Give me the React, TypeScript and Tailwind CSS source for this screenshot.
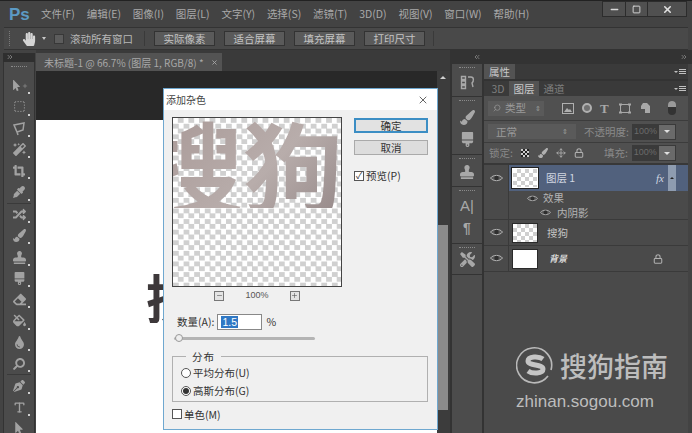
import { ChevronsLeft, ChevronsRight, Lock, Minus, Move, Plus, Search, Square, SquareDashed, Type, X } from 'lucide-react';
import type { ReactNode } from 'react';
import {
  FaBrush,
  FaCropAlt,
  FaEraser,
  FaEyeDropper,
  FaFillDrip,
  FaHandPaper,
  FaMagic,
  FaMousePointer,
  FaPaintBrush,
  FaPenNib,
  FaRandom,
  FaSearch,
  FaStamp,
  FaTint,
  FaTools,
} from 'react-icons/fa';

const cjk = '[font-family:"Noto_Sans_CJK_SC","Liberation_Sans",sans-serif]';

const menus = ['文件(F)', '编辑(E)', '图像(I)', '图层(L)', '文字(Y)', '选择(S)', '滤镜(T)', '3D(D)', '视图(V)', '窗口(W)', '帮助(H)'];

const tools: ReactNode[] = [
  <span key="move" className="flex items-center"><FaMousePointer size={11} /><Plus size={6} /></span>,
  <SquareDashed key="marquee" size={13} strokeWidth={1.5} />,
  <svg key="lasso" width="15" height="15" viewBox="0 0 15 15" fill="none" stroke="currentColor" strokeWidth="1.5"><path d="M2 4l10-2-1 7-6 2zM5 11l1 3" /></svg>,
  <FaMagic key="wand" size={13} />,
  <FaCropAlt key="crop" size={12} />,
  <FaEyeDropper key="drop" size={12} />,
  null,
  <FaRandom key="heal" size={13} />,
  <FaPaintBrush key="brush" size={13} />,
  <FaStamp key="stamp" size={13} />,
  <FaBrush key="history" size={13} />,
  <FaEraser key="eraser" size={13} />,
  <FaFillDrip key="bucket" size={13} />,
  <FaTint key="blur" size={13} />,
  <FaSearch key="dodge" size={12} className="-scale-x-100" />,
  null,
  <FaPenNib key="pen" size={12} />,
  <Type key="type" size={13} strokeWidth={2.5} />,
  <FaMousePointer key="select" size={12} />,
];

function Tool({ children }: { children: ReactNode }) {
  return (
    <div className="relative flex h-[21.3px] w-full shrink-0 items-center justify-center text-[#a2a2a2]">
      {children}
      <span className="absolute right-[4px] bottom-[2px] h-[2px] w-[2px] bg-[#d0d0d0]" />
    </div>
  );
}

function Grip() {
  return <div className="mx-auto h-[2px] w-[16px] border-t border-dotted border-[#8a8a8a]" />;
}

function PanelMenu() {
  return (
    <span className="ml-auto mr-[2px] flex items-center gap-[1px]">
      <span className="h-0 w-0 border-x-[2px] border-t-[2px] border-x-transparent border-t-[#c0c0c0]" />
      <span className="flex flex-col gap-[1px]">
        <span className="h-[1px] w-[7px] bg-[#c0c0c0]" />
        <span className="h-[1px] w-[7px] bg-[#c0c0c0]" />
        <span className="h-[1px] w-[7px] bg-[#c0c0c0]" />
      </span>
    </span>
  );
}

function OptionButton({ label }: { label: string }) {
  return (
    <button className="flex h-[15px] w-[61px] items-center justify-center border border-[#333333] bg-[#5a5a5a] text-[10.5px] text-[#c4c4c4]">
      {label}
    </button>
  );
}

function LayerEye({ small = false }: { small?: boolean }) {
  const w = small ? 11 : 13;
  return (
    <svg width={w} height={w * 0.62} viewBox="0 0 13 8" className="shrink-0">
      <path d="M0.5 4C3 0.5 10 0.5 12.5 4C10 7.5 3 7.5 0.5 4z" fill="#5a5a5a" stroke="#b4b4b4" />
      <circle cx="6.5" cy="4" r="2.2" fill="#2e2e2e" />
    </svg>
  );
}

function Caret() {
  return (
    <span className="flex h-[16px] w-[18px] items-center justify-center border border-[#3a3a3a] bg-[#6a6a6a]">
      <span className="h-0 w-0 border-x-[3px] border-t-[3px] border-x-transparent border-t-[#e0e0e0]" />
    </span>
  );
}

function Thumb({ blank = false, selected = false }: { blank?: boolean; selected?: boolean }) {
  return (
    <div
      className={`h-[20px] w-[26px] shrink-0 border ${
        selected ? 'border-white outline outline-1 outline-[#222222]' : 'border-[#2a2a2a]'
      } ${
        blank
          ? 'bg-white'
          : 'bg-white bg-[conic-gradient(#cfcfcf_25%,#ffffff_0_50%,#cfcfcf_0_75%,#ffffff_0)] bg-[length:8px_8px]'
      }`}
    />
  );
}

function SogouMark() {
  return (
    <svg width="38" height="38" viewBox="0 0 38 38" fill="none" className="shrink-0">
      <path d="M32 30A17.5 17.5 0 1 1 35 24" stroke="#b9b9b9" strokeWidth="1.6" />
      <path d="M27 13c-4-3-15-3-15 2s15 3 15 8-11 5-15 2" stroke="#c4c4c4" strokeWidth="5" />
    </svg>
  );
}

export default function App() {
  return (
    <div className={`relative flex h-[433px] w-[692px] flex-col overflow-hidden bg-[#434343] ${cjk}`}>
      {/* menu bar */}
      <div className="flex h-[27px] shrink-0 items-center border-t border-[#222222] pl-[9px] text-[10.5px] text-[#a9a9a9]">
        <span className="mr-[14px] w-[18px] font-['Liberation_Sans'] text-[17px] font-bold leading-none text-[#5c9ac4]">Ps</span>
        <div className="flex gap-[11.8px]">
          {menus.map((m) => (
            <span key={m} className="whitespace-nowrap">{m}</span>
          ))}
        </div>
        <div className="ml-auto mr-[5px] flex h-[16px] -translate-y-[5px] border border-[#2c2c2c] bg-[#505050]">
          <div className="flex w-[23px] items-center justify-center border-r border-[#2c2c2c]"><Minus size={11} strokeWidth={3} className="text-[#d8d8d8]" /></div>
          <div className="flex w-[22px] items-center justify-center border-r border-[#2c2c2c]"><Square size={9} strokeWidth={2.5} className="text-[#d8d8d8]" /></div>
          <div className="flex w-[38px] items-center justify-center"><X size={11} strokeWidth={3.5} className="text-[#e0e0e0]" /></div>
        </div>
      </div>

      {/* options bar */}
      <div className="mx-[4px] flex h-[23px] shrink-0 items-center border-y border-[#333333] bg-[#494949] text-[10.5px] text-[#b8b8b8]">
        <div className="ml-[5px] h-[15px] w-[2px] border-l border-dotted border-[#7a7a7a]" />
        <FaHandPaper size={14} className="ml-[11px] text-[#d4d4d4]" />
        <span className="ml-[6px] h-0 w-0 border-x-[2.5px] border-t-[3px] border-x-transparent border-t-[#c8c8c8]" />
        <span className="ml-[8px] h-[10px] w-[10px] border border-[#383838] bg-[#5c5c5c]" />
        <span className="ml-[6px] whitespace-nowrap">滚动所有窗口</span>
        <span className="ml-[11px] h-[15px] w-px bg-[#3a3a3a]" />
        <div className="ml-[9px] flex gap-[9px]">
          <OptionButton label="实际像素" />
          <OptionButton label="适合屏幕" />
          <OptionButton label="填充屏幕" />
          <OptionButton label="打印尺寸" />
        </div>
        <span className="ml-[8px] h-[15px] w-px bg-[#3a3a3a]" />
      </div>

      <div className="flex min-h-0 flex-1">
        {/* toolbox */}
        <div className="flex w-[36px] shrink-0 flex-col pl-[3px] pr-[1px] pt-[3px]">
          <div className="h-[9px] shrink-0 bg-[#2f2f2f] pl-[3px] text-[#a0a0a0]"><ChevronsRight size={8} /></div>
          <div className="flex flex-1 flex-col overflow-hidden border-x border-[#333333] bg-[#4b4b4b] pt-[4px]">
            <Grip />
            <div className="mt-[8px] shrink-0" />
            {tools.map((t, i) =>
              t === null ? (
                <div key={i} className="mx-[3px] h-px shrink-0 bg-[#3a3a3a]" />
              ) : (
                <Tool key={i}>{t}</Tool>
              ),
            )}
          </div>
        </div>

        {/* document */}
        <div className="flex min-w-0 flex-1 flex-col">
          <div className="flex h-[21px] shrink-0 items-end bg-[#3a3a3a] pt-[3px]">
            <div className="flex h-[18px] w-[186px] items-center gap-[7px] bg-[#535353] pl-[8px] text-[10px] text-[#a8a8a8]">
              <span className="whitespace-nowrap">未标题-1 @ 66.7% (图层 1, RGB/8) *</span>
              <X size={7} strokeWidth={3} className="shrink-0" />
            </div>
          </div>
          <div className="flex min-h-0 flex-1">
            <div className="flex min-w-0 flex-1 flex-col bg-[#282828]">
              <div className="h-[49px] shrink-0" />
              <div className="relative flex-1 overflow-hidden border-t border-dashed border-white bg-white">
                <div className="absolute left-[110px] top-[150px] h-[52px] w-[17px] overflow-hidden">
                  <span className="block text-[52px] font-bold leading-none text-[#3d383a]">搜</span>
                </div>
              </div>
            </div>
            <div className="flex w-[13px] shrink-0 flex-col bg-[#3c3c3c]">
              <span className="ml-[3px] mt-[5px] h-0 w-0 border-x-[3px] border-b-[3px] border-x-transparent border-b-[#d0d0d0]" />
              <div className="mr-[2px] mt-[146px] h-[185px] bg-[#8b8b8b]" />
            </div>
          </div>
        </div>

        {/* right dock */}
        <div className="flex w-[242px] shrink-0 flex-col border-l-2 border-[#333333]">
          <div className="flex h-[14px] shrink-0 items-center justify-between bg-[#333333] pl-[21px] pr-[4px] text-[#9a9a9a]">
            <ChevronsLeft size={8} />
            <ChevronsRight size={8} />
          </div>
          <div className="flex min-h-0 flex-1">
            <div className="flex w-[32px] shrink-0 flex-col border-r-2 border-[#333333] bg-[#4c4c4c] text-[#a8a8a8]">
              <div className="flex h-[33px] flex-col items-center border-b border-[#333333] pt-[3px]">
                <Grip />
                <svg width="15" height="15" viewBox="0 0 15 15" fill="none" stroke="currentColor" className="mt-[6px]"><path d="M1.5 1.5h4v3h-4zM1.5 6h4v3h-4zM1.5 10.5h4v3h-4zM8 2h3c3 0 3 4 1 6l1 4" strokeWidth="1.4" /></svg>
              </div>
              <div className="flex h-[58px] flex-col items-center gap-[3px] border-b border-[#333333] pt-[3px]">
                <Grip />
                <FaPaintBrush size={15} className="mt-[5px]" />
                <FaBrush size={15} className="mt-[4px]" />
              </div>
              <div className="flex h-[32px] flex-col items-center border-b border-[#333333] pt-[3px]">
                <Grip />
                <FaStamp size={14} className="mt-[5px]" />
              </div>
              <div className="flex h-[57px] flex-col items-center border-b border-[#333333] pt-[3px] font-['Liberation_Sans']">
                <Grip />
                <span className="mt-[4px] text-[15px] leading-[20px]">A|</span>
                <span className="mt-[2px] text-[14px] font-bold leading-[20px]">¶</span>
              </div>
              <div className="flex h-[31px] flex-col items-center border-b border-[#333333] pt-[3px]">
                <Grip />
                <FaTools size={15} className="mt-[3px]" />
              </div>
            </div>

            <div className="mr-[4px] flex min-w-0 flex-1 flex-col bg-[#4a4a4a] text-[10.5px] text-[#b0b0b0]">
              <div className="flex h-[15px] shrink-0 items-stretch bg-[#3a3a3a]">
                <span className="flex w-[31px] items-center justify-center bg-[#535353] text-[#c8c8c8]">属性</span>
                <PanelMenu />
              </div>
              <div className="flex h-[17px] shrink-0 items-stretch border-t-2 border-[#333333] bg-[#3a3a3a]">
                <span className="ml-[3px] flex w-[22px] items-center justify-center text-[#7e7e7e]">3D</span>
                <span className="flex w-[30px] items-center justify-center bg-[#535353] text-[#c8c8c8]">图层</span>
                <span className="flex w-[30px] items-center justify-center text-[#7e7e7e]">通道</span>
                <PanelMenu />
              </div>

              {/* filter row */}
              <div className="flex h-[25px] shrink-0 items-center border-b border-[#3c3c3c] bg-[#505050] pl-[4px]">
                <div className="flex h-[15px] w-[56px] items-center gap-[4px] bg-[#5a5a5a] pl-[5px] text-[#9a9a9a]">
                  <Search size={8} className="-scale-x-100" />
                  <span>类型</span>
                  <span className="ml-auto mr-[3px] text-[7px]">⇕</span>
                </div>
                <div className="ml-[18px] flex items-center gap-[8px] text-[#a8a8a8]">
                  <svg width="12" height="11" viewBox="0 0 12 11" className="text-[#b0b0b0]"><rect x="0.5" y="0.5" width="11" height="10" fill="none" stroke="currentColor" /><path d="M2 9l3-4 2 2 1-1 2 3z" fill="currentColor" /></svg>
                  <span className="h-[10px] w-[10px] rounded-full border-2 border-[#b0b0b0] bg-[#707070]" />
                  <span className="w-[11px] font-['Liberation_Serif'] text-[13px] font-bold leading-none">T</span>
                  <svg width="12" height="11" viewBox="0 0 12 11" fill="none" stroke="currentColor"><path d="M1.5 1.5h9v8h-9z" /><path d="M0 1.5h3M9 1.5h3M0 9.5h3M9 9.5h3" strokeWidth="2" /></svg>
                  <svg width="11" height="12" viewBox="0 0 11 12" className="ml-[1px]"><path d="M3 1h4l3 3v7H5V7H1V4z" fill="currentColor" /></svg>
                </div>
                <span className="ml-[17px] flex h-[14px] w-[8px] flex-col overflow-hidden rounded-sm bg-[#333333]"><span className="h-[6px] bg-[#9a9a9a]" /></span>
              </div>

              {/* blend row */}
              <div className="flex h-[22px] shrink-0 items-center border-b border-[#3c3c3c] bg-[#505050] pl-[4px]">
                <div className="flex h-[15px] w-[88px] items-center justify-between bg-[#5a5a5a] px-[8px] text-[#9a9a9a]">
                  <span>正常</span>
                  <span className="text-[7px]">⇕</span>
                </div>
                <span className="ml-[8px] whitespace-nowrap text-[#8a8a8a]">不透明度:</span>
                <span className="ml-[3px] flex h-[16px] w-[26px] items-center bg-[#3a3a3a] pl-[2px] font-['Liberation_Sans'] text-[9px] text-[#6a6a6a]">100%</span>
                <Caret />
              </div>

              {/* lock row */}
              <div className="flex h-[22px] shrink-0 items-center border-b-2 border-[#383838] bg-[#505050] pl-[5px]">
                <span className="whitespace-nowrap text-[#8a8a8a]">锁定:</span>
                <span className="ml-[8px] h-[8px] w-[8px] bg-[conic-gradient(#222222_25%,#cccccc_0_50%,#222222_0_75%,#cccccc_0)] bg-[length:4px_4px]" />
                <FaPaintBrush size={10} className="ml-[9px]" />
                <Move size={10} className="ml-[8px]" />
                <Lock size={10} strokeWidth={2.5} className="ml-[8px]" />
                <span className="ml-[20px] whitespace-nowrap text-[#8a8a8a]">填充:</span>
                <span className="ml-[4px] flex h-[16px] w-[26px] items-center bg-[#3a3a3a] pl-[2px] font-['Liberation_Sans'] text-[9px] text-[#6a6a6a]">100%</span>
                <Caret />
              </div>

              {/* layers */}
              <div className="flex h-[55px] shrink-0 border-b border-[#3a3a3a]">
                <div className="flex w-[25px] shrink-0 justify-center border-r border-[#3a3a3a] pt-[9px]"><LayerEye /></div>
                <div className="flex min-w-0 flex-1 flex-col">
                  <div className="flex h-[26px] shrink-0 items-center bg-[#51617d] pl-[3px] text-[#d0d6e0]">
                    <Thumb selected />
                    <span className="ml-[8px]">图层 1</span>
                    <span className="ml-auto mr-[1px] font-['Liberation_Serif'] text-[11px] italic">fx</span>
                    <span className="ml-[3px] mr-[12px] flex h-full w-[8px] items-center justify-center bg-[#8e9cb0]">
                      <span className="h-0 w-0 border-x-[2px] border-b-[2px] border-x-transparent border-b-[#222222]" />
                    </span>
                  </div>
                  <div className="flex h-[14.5px] items-center gap-[5px] pl-[18px] text-[#b4b4b4]"><LayerEye small /><span>效果</span></div>
                  <div className="flex h-[14.5px] items-center gap-[6px] pl-[31px] text-[#b4b4b4]"><LayerEye small /><span>内阴影</span></div>
                </div>
              </div>
              <div className="flex h-[26px] shrink-0 items-center border-b border-[#3a3a3a]">
                <div className="flex h-full w-[25px] shrink-0 items-center justify-center border-r border-[#3a3a3a]"><LayerEye /></div>
                <div className="ml-[3px]"><Thumb /></div>
                <span className="ml-[9px] text-[#c4c4c4]">搜狗</span>
              </div>
              <div className="flex h-[26px] shrink-0 items-center border-b border-[#3a3a3a]">
                <div className="flex h-full w-[25px] shrink-0 items-center justify-center border-r border-[#3a3a3a]"><LayerEye /></div>
                <div className="ml-[3px]"><Thumb blank /></div>
                <span className="ml-[11px] text-[9px] font-bold italic text-[#d8d8d8]">背景</span>
                <Lock size={10} strokeWidth={2.5} className="ml-[86px]" />
              </div>
            </div>
          </div>
        </div>
      </div>

      {/* filter dialog */}
      <div className="absolute left-[163px] top-[88px] flex h-[342px] w-[275px] flex-col border border-[#6fa8d0] bg-[#f0f0f0] text-[10.5px] text-[#333333]">
        <div className="flex h-[21px] shrink-0 items-center justify-between bg-white pl-[2px] pr-[8px] text-[10px] text-[#444444]">
          <span>添加杂色</span>
          <X size={12} strokeWidth={1.5} className="text-[#333333]" />
        </div>
        <div className="flex flex-1 flex-col pl-[8px] pt-[7px]">
          <div className="flex gap-[12px]">
            <div>
              <div className="relative h-[170px] w-[170px] overflow-hidden border border-[#444444] bg-white bg-[conic-gradient(#d0d0d0_25%,#ffffff_0_50%,#d0d0d0_0_75%,#ffffff_0)] bg-[length:10.6px_10.6px]">
                <span className="absolute left-[-30px] top-[2px] whitespace-nowrap bg-[linear-gradient(135deg,#a89896,#b8adab_60%,#978a8a)] bg-clip-text text-[100px] font-semibold leading-[88px] text-transparent">搜狗</span>
              </div>
              <div className="mt-[2px] flex items-center justify-center gap-[21px] font-['Liberation_Sans'] text-[9px] text-[#555555]">
                <span className="flex h-[10px] w-[10px] items-center justify-center border border-[#777777] bg-[#e4e4e4]"><Minus size={7} /></span>
                <span>100%</span>
                <span className="flex h-[10px] w-[10px] items-center justify-center border border-[#777777] bg-[#e4e4e4]"><Plus size={7} /></span>
              </div>
            </div>
            <div className="flex w-[74px] flex-col pt-[1px]">
              <button className="flex h-[15px] items-center justify-center border-2 border-[#3c8ec4] bg-[#e2e2e2]">确定</button>
              <button className="mt-[7px] flex h-[15px] items-center justify-center border border-[#aaaaaa] bg-[#dddddd]">取消</button>
              <div className="mt-[13px] flex items-center gap-[2px]">
                <span className="flex h-[10px] w-[10px] items-center justify-center border border-[#555555] bg-white text-[9px] leading-none">✓</span>
                <span>预览(P)</span>
              </div>
            </div>
          </div>
          <div className="mt-[11px] flex items-center pl-[5px]">
            <span>数量(A):</span>
            <div className="ml-[3px] flex h-[16px] w-[45px] items-center border border-[#888888] bg-white pl-[3px]">
              <span className="bg-[#2f78c4] px-[1px] font-['Liberation_Sans'] leading-[12px] text-white">1.5</span>
            </div>
            <span className="ml-[4px]">%</span>
          </div>
          <div className="relative ml-[2px] mt-[7px] h-[3px] w-[141px] rounded-sm bg-[#b4b4b4]">
            <span className="absolute left-[1px] top-[-3px] h-[8px] w-[8px] rounded-sm border border-[#999999] bg-[#eeeeee]" />
          </div>
          <div className="relative mt-[16px] flex h-[46px] w-[256px] flex-col justify-end gap-[2px] border border-[#b0b0b0] pb-[2px] pl-[8px]">
            <span className="absolute left-[13px] top-[-8px] bg-[#f0f0f0] px-[6px] tracking-[1px]">分布</span>
            <div className="flex items-center gap-[2px]">
              <span className="h-[10px] w-[10px] rounded-full border border-[#555555] bg-white" />
              <span>平均分布(U)</span>
            </div>
            <div className="flex items-center gap-[2px]">
              <span className="flex h-[10px] w-[10px] items-center justify-center rounded-full border border-[#555555] bg-white"><span className="h-[6px] w-[6px] rounded-full bg-[#333333]" /></span>
              <span>高斯分布(G)</span>
            </div>
          </div>
          <div className="mt-[5px] flex items-center gap-[2px]">
            <span className="h-[10px] w-[10px] border border-[#555555] bg-white" />
            <span>单色(M)</span>
          </div>
        </div>
      </div>

      {/* watermark */}
      <div className="absolute left-[516px] top-[346px] flex w-[156px] flex-col text-[#bdbdbd]">
        <div className="flex items-center gap-[6px]">
          <SogouMark />
          <span className="whitespace-nowrap text-[27px] font-medium leading-none">搜狗指南</span>
        </div>
        <span className="mt-[7px] whitespace-nowrap font-['Liberation_Sans'] text-[17px] leading-[22px]">zhinan.sogou.com</span>
      </div>
    </div>
  );
}
